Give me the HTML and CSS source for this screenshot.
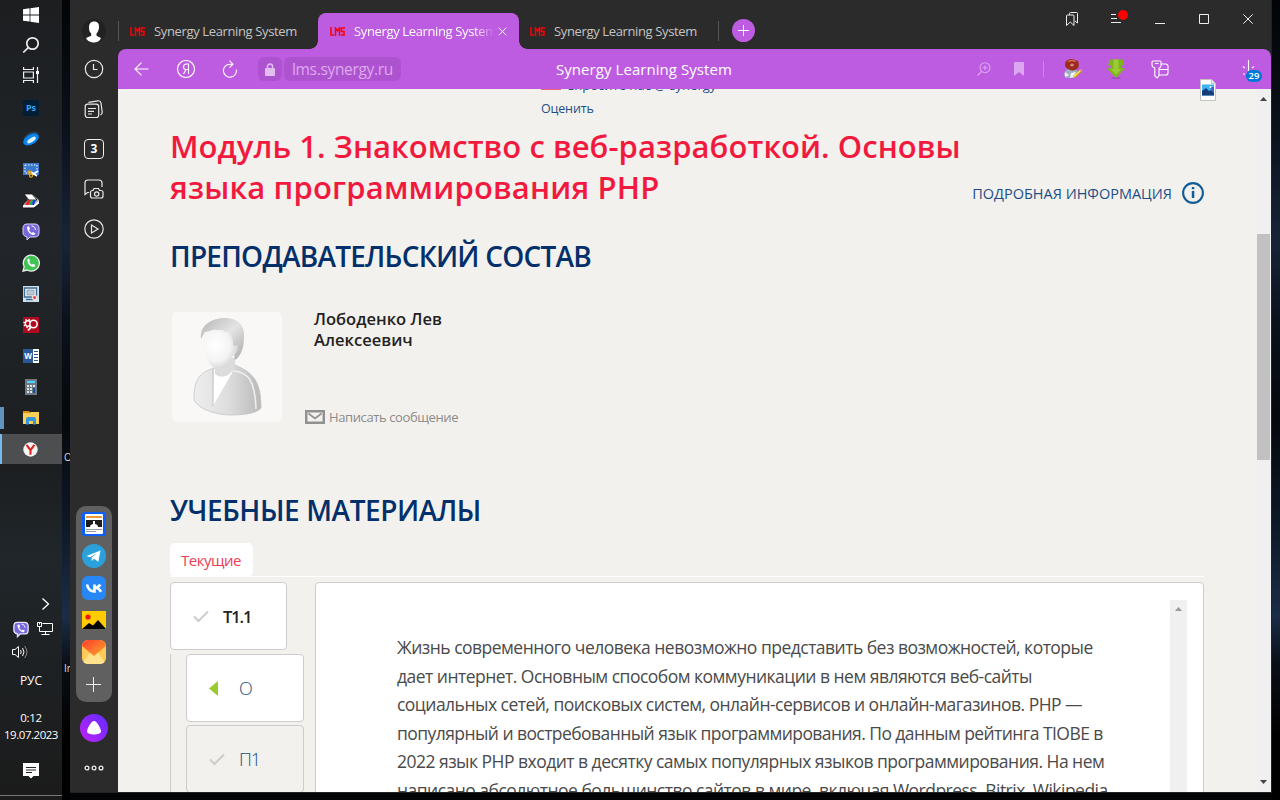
FILE: index.html
```html
<!DOCTYPE html>
<html lang="ru">
<head>
<meta charset="utf-8">
<title>Synergy Learning System</title>
<link rel="stylesheet" href="styles.css">
</head>
<body>
<div class="desktop">
  <nav class="taskbar">
    <div class="task top"><svg width="16" height="16" viewBox="0 0 16 16" fill="#fff"><path d="M0 2.3L6.6 1.3V7.5H0ZM7.4 1.2L16 0V7.5H7.4ZM0 8.4H6.6V14.6L0 13.7ZM7.4 8.4H16V16L7.4 14.8Z"/></svg></div>
    <div class="task top"><svg width="18" height="18" viewBox="0 0 18 18" fill="none" stroke="#eee" stroke-width="1.7"><circle cx="10.5" cy="7.500" r="5.700"/><path d="M6.300 11.700L1.200 16.500"/></svg></div>
    <div class="task top"><svg width="16" height="16" viewBox="0 0 16 16" fill="none" stroke="#eee" stroke-width="1.200"><path d="M.6 0V2.500H10.400V0M.6 16V13.500H10.400V16M.6 5H10.400V11H.6ZM14.500 0V16"/><path d="M13 4h3v3h-3z" fill="#fff" stroke="none"/></svg></div>
    <div class="apps">
      <div class="task"><span class="ps">Ps</span></div>
      <div class="task"><svg width="18" height="16" viewBox="0 0 18 16"><ellipse cx="9" cy="6" rx="8" ry="4.500" fill="#24405e" transform="rotate(-30 9 6)"/><ellipse cx="9" cy="8.500" rx="8.500" ry="5" fill="#0a84ee" transform="rotate(-30 9 8.500)"/><ellipse cx="9.500" cy="9" rx="5" ry="2" fill="#d9f1ff" transform="rotate(-35 9.500 9)"/></svg></div>
      <div class="task"><svg width="16" height="16" viewBox="0 0 16 16"><path d="M0 1h16v12H0z" fill="#3d78cf"/><path d="M2 3h12v8H2z" fill="none" stroke="#fff" stroke-dasharray="1.500 1.500"/><path d="M8 10l6 4M9 13l6-4" stroke="#fff" stroke-width="1.700"/><circle cx="6.500" cy="10.500" r="1.500" fill="none" stroke="#e2a21b" stroke-width="1.300"/><circle cx="8" cy="13.700" r="1.500" fill="none" stroke="#e2a21b" stroke-width="1.300"/></svg></div>
      <div class="task"><svg width="17" height="16" viewBox="0 0 17 16"><path d="M2 1h7l7 6v4l-5 4H1v-4l4-4z" fill="#b8b8b8"/><path d="M1 1h8l5 6H6z" fill="#fff" stroke="#111" stroke-width=".8"/><path d="M5 7h3l-2 5H2z" fill="#e22"/><path d="M8 7h3l-2 5H6z" fill="#16b34a"/><path d="M10 7h3l-2 5H9z" fill="#2636e8"/><path d="M0 12h11l5-4v3l-5 4H0z" fill="#fff"/><path d="M0 15h11l5-4" fill="none" stroke="#111"/></svg></div>
      <div class="task"><svg width="18" height="18" viewBox="0 0 18 18"><path d="M5 1h8c3 0 4 2 4 4v5c0 3-2 4-4 4H8l-3 3v-3c-3-1-4-2-4-4V5c0-2 1-4 4-4Z" fill="#7967dc" stroke="#d8d2ff"/><path d="M5 4l2-1 1 3-1 1c.7 1.500 1.500 2.300 3 3l1-1 2.500 1.500L12 12C8 12 5 8 5 4Z" fill="#fff"/><path d="M9.500 3c2.500 0 3.800 1.500 4 4" fill="none" stroke="#fff"/></svg></div>
      <div class="task"><svg width="18" height="18" viewBox="0 0 18 18"><path d="M1 17l1.200-4.300A8 8 0 1 1 5.300 16Z" fill="#3fc351" stroke="#eee" stroke-width="1.300"/><path d="M5.500 5l1.500-.5 1 2.500-.8 1c.7 1.300 1.500 2 2.800 2.700l1-1 2.300 1.200-.3 1.600C9.500 14.500 4.500 9.500 5.500 5Z" fill="#fff"/></svg></div>
      <div class="task"><svg width="16" height="16" viewBox="0 0 16 16"><path d="M0 0h16v16H0z" fill="#cfe0ea"/><path d="M1.500 2h12v9H1.500zM3 13.500h7" fill="#f2f7fa" stroke="#3e6e96" stroke-width="1.400"/><path d="M4 4h7v5H4z" fill="#b9c9d6" stroke="#7b93a8" stroke-width=".7"/><circle cx="11.500" cy="11.500" r="2.700" fill="#f8dcdc"/><circle cx="11.500" cy="11.500" r="1.500" fill="#e1484c"/></svg></div>
      <div class="task"><svg width="16" height="16" viewBox="0 0 16 16"><path d="M0 0h16v16H0z" fill="#b00920"/><circle cx="5" cy="6.500" r="2.700" fill="none" stroke="#fff" stroke-width="1.400"/><circle cx="5" cy="6.500" r="4" fill="none" stroke="#fff" stroke-width="1.400" stroke-dasharray="1.500 1.640"/><circle cx="10.500" cy="7" r="3.700" fill="#b00920" stroke="#fff" stroke-width="1.600"/><path d="M8.300 9.800L5 13.500" stroke="#fff" stroke-width="1.800"/></svg></div>
      <div class="task"><span class="word"><b>W</b><i></i></span></div>
      <div class="task"><svg width="12" height="16" viewBox="0 0 12 16"><path d="M0 0h12v16H0z" fill="#6f7a84"/><path d="M2 2h8v2H2z" fill="#4cd3f7"/><path d="M2 6h2v2H2zm3 0h2v2H5zm3 0h2v2H8zM2 9h2v2H2zm3 0h2v2H5zm-3 3h2v2H2zm3 0h2v2H5z" fill="#dde2e6"/><path d="M8 9h2v5H8z" fill="#15509d"/></svg></div>
      <div class="task open"><svg width="16" height="14" viewBox="0 0 16 14"><path d="M0 0h6l2 2H0z" fill="#d99400"/><path d="M0 2h7l1-1h8v12H0z" fill="#fcd056"/><path d="M3 8q0-2 2-2h6q2 0 2 2v5.500h-3V10H6v3.500H3z" fill="#3795e0"/></svg></div>
      <div class="task active"><svg width="15" height="15" viewBox="0 0 15 15"><circle cx="7.500" cy="7.500" r="7.200" fill="#f5f5f5"/><path d="M3.600 2.800L7.500 8.200L11.400 2.800M7.500 8V12.800" fill="none" stroke="#e0201b" stroke-width="2"/></svg></div>
    </div>
    <div class="tray">
      <div class="tray-row r1"><svg width="9" height="14" viewBox="0 0 9 14" fill="none" stroke="#fff" stroke-width="1.300"><path d="M1.500 1.500L7.500 7L1.500 12.500"/></svg></div>
      <div class="tray-row r2"><svg width="16" height="17" viewBox="0 0 18 18"><path d="M5 1h8c3 0 4 2 4 4v5c0 3-2 4-4 4H8l-3 3v-3c-3-1-4-2-4-4V5c0-2 1-4 4-4Z" fill="#7967dc" stroke="#e8e4ff" stroke-width="1.500"/><path d="M5 4l2-1 1 3-1 1c.7 1.500 1.500 2.300 3 3l1-1 2.500 1.500L12 12C8 12 5 8 5 4Z" fill="#fff"/><path d="M9.500 3c2.500 0 3.800 1.500 4 4" fill="none" stroke="#fff"/></svg><svg width="16" height="14" viewBox="0 0 16 14" fill="none" stroke="#fff"><path d="M5.500 1.500h10v8h-13V5M8.500 9.500v3M4.500 12.500h8M.5 .5h4v4h-4zM2.500 .5v2"/></svg></div>
      <div class="tray-row r3"><svg width="17" height="14" viewBox="0 0 17 14" fill="none" stroke="#fff"><path d="M.5 4.500H3L6.500 1.500V12.500L3 9.500H.5ZM8.500 5q1.500 2 0 4M10.500 3q3 4 0 8"/><path d="M12.500 1q5 6 0 12" stroke="#888"/></svg></div>
      <div class="lang">РУС</div>
      <div class="clock"><span class="time">0:12</span><span class="date">19.07.2023</span></div>
      <div class="notice"><svg width="16" height="16" viewBox="0 0 16 16"><path d="M0 0h16v13h-5.500L8 15.500L5.500 13H0z" fill="#fff"/><path d="M3 4.500h10M3 7h10M3 9.500h6" stroke="#222"/></svg></div>
    </div>
  </nav>
  <div class="wall left"><span class="w1">Оп</span><span class="w2">Ir</span></div>
  <main class="browser">
    <aside class="side">
      <div class="me"><svg width="24" height="24" viewBox="0 0 24 24"><circle cx="12" cy="12" r="12" fill="#222"/><path d="M12 2.500c4 0 5.300 2.500 5 6-.3 3-1.300 5-2.500 6v2.200l4.500 2.300c-1 3-4 4.500-7 4.500s-7-1.500-8-4.500l5.200-2.300V14.500C7.500 13 7 11 7 8.500c0-4 2-6 5-6Z" fill="#fff"/></svg></div>
      <div class="si"><svg width="20" height="20" viewBox="0 0 20 20"><circle cx="10" cy="10" r="8.700"/><path d="M9.500 5v5.500h4"/></svg></div>
      <div class="si"><svg width="20" height="20" viewBox="0 0 20 20"><rect x="1.200" y="5.200" width="13.500" height="13.300" rx="2.500"/><path d="M4.500 3.300L14 1.800Q16.500 1.500 17 4L18.200 13Q18.300 15 16.500 16M4 9.500h8M4 12.300h6M4 15h4"/></svg></div>
      <div class="si"><span class="three">3</span></div>
      <div class="si"><svg width="22" height="20" viewBox="0 0 22 20"><path d="M6 13.500H4.500L2 15.500V4Q2 1 5 1H16Q19 1 19 4V8"/><path d="M10 11.500l1-2h4.500l1 2H18q2 0 2 2V17q0 2-2 2H9.500q-2 0-2-2v-3.500q0-2 2-2Z"/><circle cx="13.700" cy="15" r="2.200"/></svg></div>
      <div class="si"><svg width="20" height="20" viewBox="0 0 20 20"><circle cx="10" cy="10" r="9.200"/><path d="M7.500 6v8l6.500-4z"/></svg></div>
      <div class="dock">
        <svg width="24" height="24" viewBox="0 0 24 24"><rect width="24" height="24" rx="3" fill="#0b61f7"/><rect x="3" y="2" width="18" height="20" rx="1" fill="#fff"/><path d="M4 4h16v2H4z" fill="#f19a2f"/><path d="M4 8h16v7H4z" fill="#1c1c1c"/><path d="M8 15q0-2.500 3-3v-3h2v3q3 .5 3 3z" fill="#fff"/><path d="M4 17.500h16M4 19.500h10" stroke="#999"/></svg>
        <svg width="24" height="24" viewBox="0 0 24 24"><circle cx="12" cy="12" r="12" fill="#2ba1dc"/><path d="M4.500 12L18.500 6.500L16.300 17.800L12 14.800L9.700 17V13.500L15 9L8 13.300Z" fill="#fff"/></svg>
        <svg width="24" height="24" viewBox="0 0 24 24"><rect width="24" height="24" rx="6" fill="#2787f5"/><path d="M5 8.500Q6.500 15.500 12.500 15.500V8.500M12.500 12Q16.500 11.500 18.300 8.500M12.500 11.500Q17 12 19 15.800" fill="none" stroke="#fff" stroke-width="2.600"/></svg>
        <svg width="24" height="24" viewBox="0 0 24 24"><path d="M0 3h24v18H0z" fill="#fc0"/><circle cx="6" cy="9" r="2.600" fill="#f01818"/><path d="M0 21l7-6 4 2.500L16 12l8 9z" fill="#050505"/></svg>
        <svg width="24" height="24" viewBox="0 0 24 24"><defs><linearGradient id="mail" x2="1" y2="1"><stop stop-color="#ff3f2c"/><stop offset="1" stop-color="#ffa62c"/></linearGradient><clipPath id="mc"><rect width="24" height="24" rx="6"/></clipPath></defs><g clip-path="url(#mc)"><path d="M0 0h24v24H0z" fill="#ffca55"/><path d="M0 24L9 11h6l9 13z" fill="#ffe28b"/><path d="M0 0h24v6L12 16L0 6z" fill="url(#mail)"/></g></svg>
        <svg width="24" height="24" viewBox="0 0 24 24"><path d="M11.500 5v15M4 12.500h15" stroke="#eee"/></svg>
      </div>
      <div class="alice"><svg width="28" height="28" viewBox="0 0 28 28"><defs><linearGradient id="al" y2="1" x1="1" x2="0"><stop stop-color="#5e2cff"/><stop offset="1" stop-color="#c121fa"/></linearGradient></defs><circle cx="14" cy="14" r="14" fill="url(#al)"/><path d="M14 7c3 0 7 8 7 10.500 0 2-3.500 3-7 3s-7-1-7-3C7 15 11 7 14 7Z" fill="#fff"/></svg></div>
      <div class="dots"><svg width="20" height="6" viewBox="0 0 20 6" fill="none" stroke="#eee" stroke-width="1.300"><circle cx="3" cy="3" r="1.900"/><circle cx="10" cy="3" r="1.900"/><circle cx="17" cy="3" r="1.900"/></svg></div>
    </aside>
    <section class="win">
      <header class="tabs">
        <div class="tab first"><svg class="lms" width="15" height="9" viewBox="0 0 15 9"><path d="M1 0V8H4M5.500 9V1L7.500 4L9.500 1V9M15 1H11.500V4.500H14V8H11"/></svg><span class="tt">Synergy Learning System</span></div>
        <div class="tab on"><svg class="lms" width="15" height="9" viewBox="0 0 15 9"><path d="M1 0V8H4M5.500 9V1L7.500 4L9.500 1V9M15 1H11.500V4.500H14V8H11"/></svg><span class="tt fade">Synergy Learning System</span><svg class="x" width="9" height="9" viewBox="0 0 9 9"><path d="M.7 .7L8.300 8.300M8.300 .7L.7 8.300" stroke="#fff"/></svg></div>
        <div class="tab last"><svg class="lms" width="15" height="9" viewBox="0 0 15 9"><path d="M1 0V8H4M5.500 9V1L7.500 4L9.500 1V9M15 1H11.500V4.500H14V8H11"/></svg><span class="tt">Synergy Learning System</span></div>
        <div class="plus"><svg width="23" height="23" viewBox="0 0 23 23"><circle cx="11.500" cy="11.500" r="11.500" fill="#bd5ce0"/><path d="M11.500 6v11M6 11.500h11" stroke="#fff"/></svg></div>
        <div class="ctl">
          <svg width="14" height="16" viewBox="0 0 14 16"><path d="M4.500 4V2.500Q4.500 1.500 5.500 1.500H11.500Q12.500 1.500 12.500 2.500V12L10 10M1.500 14.500V5Q1.500 4 2.500 4H8Q9 4 9 5V14.500L5.300 11Z"/></svg>
          <svg class="menu" width="18" height="16" viewBox="0 0 18 16"><path d="M1 4.500H6M1 8.500H7M1 12.500H11"/><circle cx="13" cy="5" r="5" fill="red" stroke="none"/></svg>
          <svg width="10" height="10" viewBox="0 0 10 10"><path d="M0 9.500H10"/></svg>
          <svg width="10" height="10" viewBox="0 0 10 10"><path d="M.5 .5h9v9h-9z"/></svg>
          <svg width="10" height="10" viewBox="0 0 10 10"><path d="M.3 .3L9.700 9.700M9.700 .3L.3 9.700"/></svg>
        </div>
      </header>
      <div class="bar">
        <svg class="line back" width="15" height="14" viewBox="0 0 15 14"><path d="M14.500 7H1M7.500 .7L1 7L7.500 13.300"/></svg>
        <svg class="line ya" width="18" height="18" viewBox="0 0 18 18"><circle cx="9" cy="9" r="8.500"/><path d="M11.500 14V4H9.500Q6.500 4 6.500 7Q6.500 9.500 9 9.500H11.500M9 9.500L6.500 14"/></svg>
        <svg class="line rel" width="15" height="18" viewBox="0 0 15 18"><path d="M10.500 4.200H8A6.500 6.500 0 1 0 14.300 9.500M7.500 .7L11 4.200L7.500 7.500"/></svg>
        <span class="lock"><svg width="10" height="13" viewBox="0 0 10 13"><rect y="5" width="10" height="8" rx="1" fill="#e2bdf0"/><path d="M2.500 6V3.500a2.500 2.500 0 0 1 5 0V6" fill="none" stroke="#e2bdf0" stroke-width="1.500"/></svg></span>
        <span class="url">lms.synergy.ru</span>
        <span class="ptitle">Synergy Learning System</span>
        <div class="tools">
          <svg class="line t1" width="14" height="14" viewBox="0 0 14 14"><circle cx="8" cy="5.700" r="5"/><path d="M4.500 9.500L.5 13.500M8 3.200V8.200M5.500 5.700H10.500"/></svg>
          <svg class="t2" width="10" height="14" viewBox="0 0 10 14"><path d="M0 1Q0 0 1 0H9Q10 0 10 1V14L5 10L0 14Z" fill="#dda6f0"/></svg>
          <i class="sep"></i>
          <svg class="t3" width="20" height="20" viewBox="0 0 20 20"><path d="M1 16q0-4 4-6h8l3 5-5 4-8 0z" fill="#9fb0c2"/><path d="M2 13l4 3-4 2zM8 14l5-1-2 5-4 1z" fill="#eef3f8"/><path d="M3 2Q6-.5 9 0t6 2q1.500 4 0 7-3 3-6.500 2.500T2.500 8Q1.500 5 3 2Z" fill="#9c2d1e"/><path d="M5 2.500q4-2 8 0" fill="none" stroke="#cf6f56" stroke-width="1.300"/><path d="M7 6h4M9 4.500v3" stroke="#f0ac90"/><path d="M11 18L18 11.500" stroke="#c79a17" stroke-width="3"/><path d="M11 17.500L18 11" stroke="#ffe45a" stroke-width="1.500"/><path d="M17.500 12l1.500-1.500" stroke="#e57c9a" stroke-width="2.500"/></svg>
          <svg class="t4" width="20" height="20" viewBox="0 0 20 20"><ellipse cx="10" cy="19" rx="5" ry=".8" fill="#9144b0"/><path d="M3 .5H17V4.500L18.500 5L17 6.500H15V9H19.500L10 19L.5 9H5V6.500H3L1.500 5L3 4.500Z" fill="#7fb41c"/><path d="M7.500 .5h5V10h3L10 15.500L4.500 10h3z" fill="#9acb35"/></svg>
          <svg class="line t5" width="18" height="19" viewBox="0 0 18 19"><path d="M2.500 1H9Q10 1 10 2V6Q10 7.500 8 8V15.500L6.200 18L3.800 16V8Q1 7 1 5V2Q1 1 2.500 1ZM4 3.500H7.500M10 4H14.500Q17 4 17 6.500V13Q17 15 14.500 15H8M8 9.500H17"/></svg>
          <span class="dl"><svg class="line" width="14" height="17" viewBox="0 0 14 17"><path d="M6.500 1V12M1 7.500L3 9M1 15H3M12 7.500L10 9"/></svg><b>29</b></span>
        </div>
        <svg class="pic" width="16" height="22" viewBox="0 0 16 22"><path d="M.5 .5H11.500L15.500 4.500V21.500H.5Z" fill="#fdfdfd" stroke="#c3c3c3"/><path d="M11.500 .5V4.500H15.500" fill="#eee" stroke="#c3c3c3"/><path d="M2 5.500h12v11H2z" fill="#3fb3f0"/><path d="M10 8l4 0v8z" fill="#4863c7"/><path d="M2 12l4-3 3 3 2-1 3 3v2.500H2z" fill="#143c78"/><circle cx="10.500" cy="8" r="1" fill="#fff"/></svg>
      </div>
      <div class="view">
        <article class="page">
          <div class="rate"><div class="cut"><i></i>Спросите нас @ synergy</div><a>Оценить</a></div>
          <div class="head">
            <h1><span class="l1">Модуль 1. Знакомство с веб-разработкой. Основы</span><br><span class="l2">языка программирования PHP</span></h1>
            <a class="info"><span>ПОДРОБНАЯ ИНФОРМАЦИЯ</span><svg width="22" height="22" viewBox="0 0 22 22"><circle cx="11" cy="11" r="9.900" fill="none" stroke="#135c97" stroke-width="2.100"/><path d="M9.800 5h2.500v2.300H9.800zM9.800 9h2.500v7H9.800z" fill="#135c97"/></svg></a>
          </div>
          <h2 class="h-a">ПРЕПОДАВАТЕЛЬСКИЙ СОСТАВ</h2>
          <div class="teacher">
            <div class="photo"><svg width="110" height="110" viewBox="0 0 110 110"><defs><linearGradient id="g1"><stop stop-color="#eee"/><stop offset=".5" stop-color="#dedede"/><stop offset="1" stop-color="#b9b9b9"/></linearGradient><radialGradient id="g2" cx=".35" cy=".4" r=".7"><stop stop-color="#fff"/><stop offset=".6" stop-color="#f4f4f4"/><stop offset="1" stop-color="#cfcfcf"/></radialGradient><linearGradient id="g3" x2="1" y2="1"><stop stop-color="#b5b5b5"/><stop offset=".5" stop-color="#e4e4e4"/><stop offset="1" stop-color="#aaa"/></linearGradient></defs><path d="M22 87C22 68 27 61 42 56L63 53C82 61 89 70 89 96C84 102 70 103 57 103C40 102 25 96 22 87Z" fill="url(#g1)" stroke="#c4c4c4" stroke-width=".8"/><path d="M42 57L61 54L60 61L41 94Z" fill="#fff"/><path d="M41 57V94" stroke="#c3c3c3"/><path d="M43 53L63 45V54C59 65 48 67 43 62Z" fill="#dcdcdc"/><path d="M29 27C27 13 40 6 54 6C68 7 73 15 72 26C72 37 68 45 63 48L60 25L50 18L33 20Z" fill="url(#g3)"/><path d="M31 24C38 16 46 17 53 20C60 17 60 25 61 34C66 32 67 34 65 39C64 43 60 43 60 46C58 55 46 58 41 55C34 49 31 37 31 24Z" fill="url(#g2)"/><path d="M61 59C76 60 83 68 84 97" fill="none" stroke="#eee" stroke-width="1.500"/></svg></div>
            <div class="who"><div class="name">Лободенко Лев<br>Алексеевич</div>
            <a class="msg"><svg width="20" height="14" viewBox="0 0 20 14" fill="none" stroke="#919191" stroke-width="2.500"><path d="M1.200 1.200h17.600v11.600H1.200z"/><path d="M3.500 3.500L10 8.500L16.500 3.500" stroke-width="1.700"/></svg><span>Написать сообщение</span></a></div>
          </div>
          <h2 class="h-b">УЧЕБНЫЕ МАТЕРИАЛЫ</h2>
          <div class="cur"><span>Текущие</span></div>
          <div class="study">
            <div class="list">
              <div class="card t"><svg class="ck" width="16" height="13" viewBox="0 0 16 13"><path d="M1 6.500L5.500 11L15 1.500"/></svg><b>Т1.1</b></div>
              <div class="sub">
                <div class="card w"><svg class="tri" width="9" height="15" viewBox="0 0 9 15"><path d="M9 0V15L0 7.500Z" fill="#98cb2b"/></svg><span>О</span></div>
                <div class="card"><svg class="ck" width="16" height="13" viewBox="0 0 16 13"><path d="M1 6.500L5.500 11L15 1.500"/></svg><span class="p1">П1</span></div>
              </div>
            </div>
            <div class="text">
              <p>Жизнь современного человека невозможно представить без возможностей, которые<br>дает интернет. Основным способом коммуникации в нем являются веб-сайты<br>социальных сетей, поисковых систем, онлайн-сервисов и онлайн-магазинов. PHP —<br><span class="tight">популярный и востребованный язык программирования. По данным рейтинга TIOBE в</span><br>2022 язык PHP входит в десятку самых популярных языков программирования. На нем<br>написано абсолютное большинство сайтов в мире, включая Wordpress, Bitrix, Wikipedia</p>
              <div class="iscroll"><svg width="7" height="4" viewBox="0 0 7 4"><path d="M0 4L3.500 0L7 4Z" fill="#999"/></svg></div>
            </div>
          </div>
        </article>
        <div class="scroll"><svg width="7" height="4" viewBox="0 0 7 4"><path d="M0 4L3.500 0L7 4Z" fill="#444"/></svg><i></i><svg class="dn" width="7" height="4" viewBox="0 0 7 4"><path d="M0 0L3.500 4L7 0Z" fill="#444"/></svg></div>
      </div>
    </section>
  </main>
  <div class="wall right"></div>
</div>
</body>
</html>
```
FILE: styles.css
```css
* { box-sizing: border-box; }
body { margin: 0; font-family: "Open Sans", "Noto Sans", sans-serif; }
svg { display: block; flex: none; }
.desktop { display: grid; grid-template-columns: 62px 8px 1202px 8px; width: 1280px; height: 800px; overflow: hidden; background: #030405; }

/* Taskbar */
.taskbar { display: flex; flex-direction: column; background: linear-gradient(#1c1e20, #22262a 30%, #1c1e20 58%, #20262a 70%, #1b1b1b); border-bottom: 4px solid #1c1c1c; }
.task { height: 30px; display: flex; align-items: center; justify-content: center; }
.apps { display: flex; flex-direction: column; gap: 1px; padding-top: 3px; }
.ps { width: 16px; height: 16px; border-radius: 2px; background: #001e36; color: #31a8ff; font: bold 9px/16px "Open Sans", sans-serif; text-align: center; }
.word { width: 16px; height: 14px; display: flex; background: #fff; }
.word b { width: 10px; background: #2b579a; color: #fff; font: bold 8px/14px "Open Sans", sans-serif; text-align: center; }
.word i { flex: 1; margin: 2px 1px; background: repeating-linear-gradient(#2b579a 0 1px, #fff 1px 3px); }
.open { border-left: 4px solid #5f92bd; padding-right: 4px; height: 22px; margin: 4px 0; }
.active { background: #4c4e50; border-left: 2px solid #76b9ed; padding-right: 3px; }
.tray { padding-top: 130px; color: #fff; font-size: 12px; flex: 1; border-bottom: 1px solid #777; }
.tray-row { display: flex; align-items: center; height: 24px; }
.r1 { padding: 0 0 4px 41px; }
.r2 { gap: 8px; padding-left: 13px; height: 22px; }
.r3 { padding-left: 12px; }
.lang { margin-top: 9px; height: 16px; line-height: 16px; text-align: center; }
.clock { display: flex; flex-direction: column; align-items: center; line-height: 17px; margin-top: 20px; font-size: 11.5px; }
.time { letter-spacing: -.35px; }
.date { letter-spacing: -.47px; }
.notice { display: flex; justify-content: center; margin-top: 20px; }

/* Wallpaper strips */
.wall { overflow: hidden; background: linear-gradient(#020406, #0a1019 15%, #172438 30%, #0b121c 40%, #05080c 52%, #0d1826 65%, #1a2d47 77%, #0a0f16 83%, #000 92%); color: #ddd; font-size: 10px; }
.left { display: flex; flex-direction: column; padding: 450px 0 0 2px; line-height: 14px; }
.w2 { margin-top: 197px; }

/* Browser window */
.browser { height: 793px; display: grid; grid-template-columns: 48px 1fr; background: #2b2b2b; border-right: 1px solid #222; border-bottom: 1px solid #222; }
.side { display: flex; flex-direction: column; align-items: center; padding-top: 13px; }
.me { height: 36px; display: flex; align-items: center; }
.si { height: 40px; display: flex; align-items: center; }
.si svg { fill: none; stroke: #e8e8e8; stroke-width: 1.2; }
.three { width: 20px; height: 20px; border: 1.3px solid #eee; border-radius: 4px; color: #fff; font: bold 12px/18px "Open Sans", sans-serif; text-align: center; }
.dock { width: 36px; height: 196px; margin-top: 257px; padding-top: 6px; border-radius: 10px; background: #606060; display: flex; flex-direction: column; align-items: center; gap: 8px; }
.alice { margin-top: 12px; }
.dots { margin-top: 23px; }

.win { display: flex; flex-direction: column; height: 792px; min-width: 0; }
.tabs { height: 49px; padding-top: 13px; display: flex; }
.tab { width: 200px; height: 36px; display: flex; align-items: center; padding-left: 12px; position: relative; }
.tab.first::before, .tab.last::after { content: ""; position: absolute; left: 0; top: 8px; width: 1px; height: 20px; background: #555; }
.tab.last::after { left: auto; right: 0; }
.tab.on { background: #bd5ce0; border-radius: 8px 8px 0 0; box-shadow: 1px 0 #bd5ce0; }
.tab.last { width: 201px; }
.tab.on::before, .tab.on::after { content: ""; position: absolute; bottom: 0; width: 8px; height: 8px; z-index: 1; }
.tab.on::before { left: -8px; background: radial-gradient(circle at 0 0, transparent 7.5px, #bd5ce0 8px); }
.tab.on::after { right: -9px; background: radial-gradient(circle at 100% 0, transparent 7.5px, #bd5ce0 8px); }
.lms { fill: none; stroke: red; stroke-width: 1.5; }
.tt { margin-left: 9px; color: #c4c4c4; font-size: 13px; letter-spacing: -.36px; white-space: nowrap; overflow: hidden; }
.fade { width: 139px; color: #fff; -webkit-mask-image: linear-gradient(90deg, #000 120px, transparent 141px); }
.x { margin-left: 5px; }
.plus { padding: 6px 0 0 13px; }
.ctl { display: flex; align-items: center; height: 12px; margin-left: auto; padding-right: 18px; }
.ctl svg { fill: none; stroke: #eee; }
.ctl svg + svg { margin-left: 34px; }
.ctl svg:nth-child(2) { margin-left: 31px; }
.ctl svg:nth-child(3) { margin-left: 27px; }
.ctl .menu { margin-bottom: 2px; }

.bar { height: 40px; display: flex; align-items: center; background: #bd5ce0; border-radius: 8px 8px 0 0; position: relative; z-index: 1; }
.line { fill: none; stroke: #fff; stroke-width: 1.1; }
.back { margin-left: 16px; }
.ya { margin-left: 28px; }
.rel { margin-left: 27px; }
.lock { width: 24px; height: 24px; margin-left: 21px; border-radius: 6px; background: #ae53cf; display: flex; align-items: center; justify-content: center; }
.url { width: 117px; height: 24px; margin-left: 2px; padding-left: 8px; border-radius: 6px; background: #ae53cf; color: #dfa9f0; font-size: 15.5px; letter-spacing: -.33px; line-height: 24px; white-space: nowrap; }
.ptitle { margin-left: 155px; color: #fff; font-size: 15px; letter-spacing: .06px; white-space: nowrap; }
.tools { position: relative; display: flex; align-items: center; margin-left: auto; padding-right: 9px; }
.bar .t1 { stroke: #dda6f0; }
.t2 { margin-left: 23px; }
.sep { width: 1px; height: 16px; margin-left: 19px; background: #cf86e8; }
.t3 { margin-left: 19px; }
.t4 { margin-left: 23px; }
.t5 { margin-left: 25px; }
.dl { width: 20px; height: 20px; margin-left: 73px; position: relative; }
.dl b { position: absolute; left: 4px; top: 11px; width: 16px; height: 12px; border-radius: 6px; background: #0078d7; color: #fff; font-size: 9.5px; font-weight: 600; line-height: 12px; text-align: center; }
.pic { position: absolute; left: 1082px; top: 30px; }

/* Page */
.view { flex: 1; min-height: 0; display: grid; grid-template-columns: 1138px 15px; background: #f3f1ed; overflow: hidden; }
.page { padding: 0 52px; overflow: hidden; height: 703px; white-space: nowrap; }
.rate { margin: -13px 0 0 371px; height: 50px; font-size: 13px; color: #1c4f87; line-height: 18px; }
.cut { height: 18px; display: flex; }
.cut i { width: 20px; height: 14px; margin-right: 5px; background: #e9657b; }
.rate a { display: inline-block; margin-top: 6px; font-size: 12.5px; font-weight: 500; letter-spacing: -.15px; }
.head { display: flex; justify-content: space-between; align-items: flex-end; height: 82px; }
h1, h2, p { margin: 0; }
h1 { color: #f2193f; font-size: 31px; font-weight: 600; line-height: 41px; }
.l1 { letter-spacing: .06px; }
.l2 { letter-spacing: .17px; }
.info { display: flex; align-items: center; gap: 10px; color: #1c4f87; font-size: 14.5px; padding-bottom: 4px; }
h2 { color: #03306b; font-size: 28px; font-weight: 600; line-height: 34px; }
.h-a { margin-top: 31px; letter-spacing: -.75px; }
.teacher { display: flex; margin: 39px 0 0 2px; height: 110px; }
.photo { width: 110px; height: 110px; border-radius: 5px; background: #f9f8f6; }
.who { margin-left: 23px; display: flex; flex-direction: column; justify-content: space-between; }
.name { padding-left: 9px; margin-top: -4px; color: #222; font-size: 16.5px; font-weight: 600; letter-spacing: .02px; line-height: 21px; }
.msg { display: flex; align-items: center; gap: 4px; color: #8b8b8b; font-size: 13px; letter-spacing: -.39px; line-height: 18px; margin-bottom: -4px; }
.h-b { margin-top: 71px; letter-spacing: -.41px; }
.cur { margin-top: 16px; height: 34px; border-bottom: 1px solid #fff; }
.cur > span { display: block; width: 83px; height: 34px; padding-left: 11px; border-radius: 5px; background: #fff; color: #ea4054; font-size: 15px; letter-spacing: -.5px; line-height: 35px; }
.study { display: flex; gap: 11px; margin-top: 5px; }
.list { width: 134px; }
.card { width: 118px; height: 68px; display: flex; align-items: center; border: 1px solid #ccc; border-radius: 4px; padding-left: 22px; color: #1c4f87; font-size: 18px; font-weight: 300; }
.card.t { width: 117px; background: #fff; color: #222; }
.card b { font-weight: 600; font-size: 16.5px; letter-spacing: -1.1px; }
.p1 { letter-spacing: -1px; }
.w { background: #fff; }
.ck { fill: none; stroke: #ccc; stroke-width: 2; margin-right: 14px; }
.tri { margin-right: 21px; }
.sub { margin-top: 4px; padding-left: 15px; height: 160px; border-left: 1px solid #ccc; display: flex; flex-direction: column; gap: 3px; }
.text { width: 889px; height: 230px; display: flex; justify-content: space-between; background: #fff; border: 1px solid #ccc; border-radius: 4px; padding: 17px 16px 0 81px; }
.text p { padding-top: 33px; color: #4a4a4a; font-size: 17.5px; letter-spacing: -.52px; line-height: 28.5px; width: 720px; }
.tight { letter-spacing: -.565px; }
.iscroll { width: 17px; background: #f0f0f0; padding: 7px 5px; }
.scroll { display: flex; flex-direction: column; align-items: center; background: #f0f0f0; padding: 8px 1px; }
.scroll i { width: 13px; height: 226px; margin-top: 133px; background: #c1c1c1; }
.dn { margin-top: auto; }
```
